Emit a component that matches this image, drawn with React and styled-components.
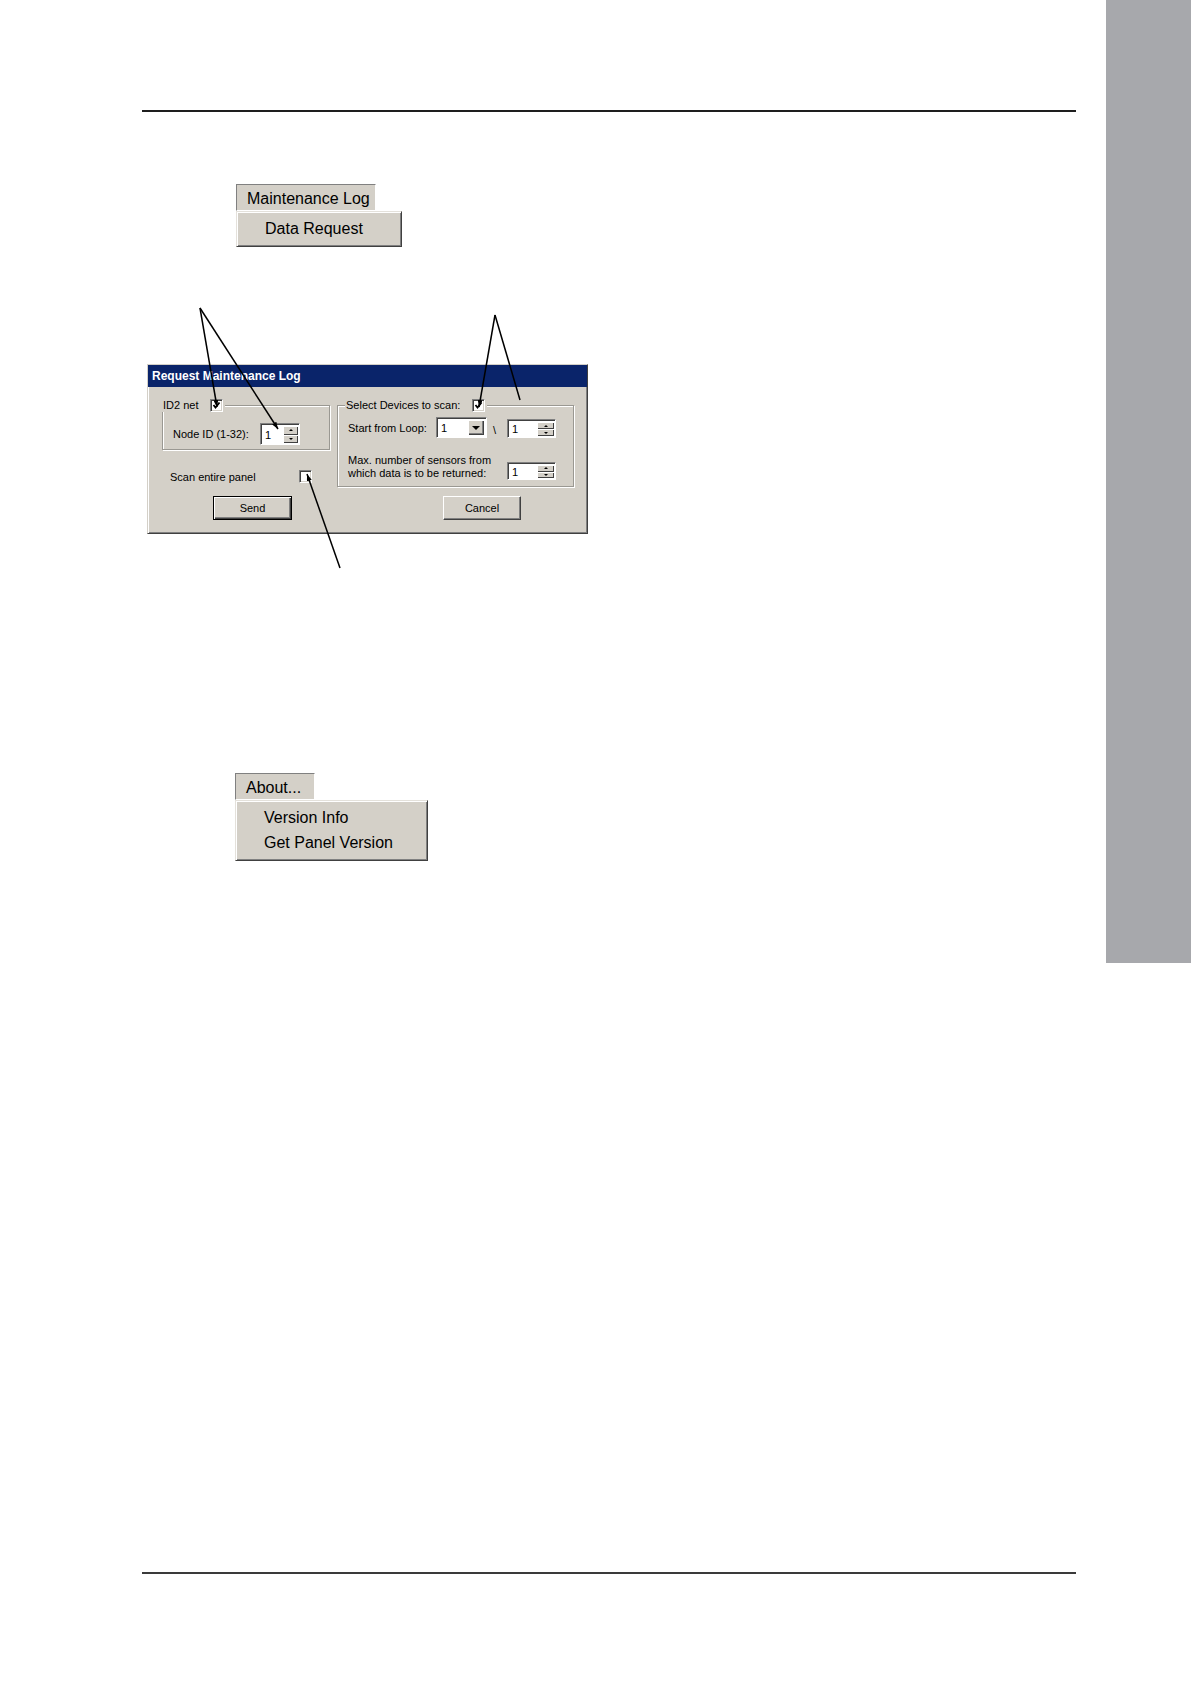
import styled, { createGlobalStyle } from 'styled-components'

const GlobalStyle = createGlobalStyle`
  html, body {
    margin: 0;
    padding: 0;
    background: #fff;
  }
  body {
    font-family: "Liberation Sans", Arial, sans-serif;
    color: #000;
  }
`

const Check = () => (
  <svg width="9" height="9" viewBox="0 0 9 9">
    <polyline points="1.5,4 3.5,6.5 7.5,1.5" fill="none" stroke="#000" strokeWidth="1.8" />
  </svg>
)

const SpinBox = ({ w, h, btn }) => (
  <SpinField $w={w} $h={h}>
    <FieldValue>1</FieldValue>
    <SpinButtons $w={btn}>
      <SpinBtn><Tri $up /></SpinBtn>
      <SpinBtn><Tri /></SpinBtn>
    </SpinButtons>
  </SpinField>
)

const App = () => {
  return (
    <Page>
      <GlobalStyle />
      <Main>
        <Rule $thick={2} $color="#1e1e1e" />

        <Menu $margin="72px 0 0 94px">
          <MenuTitle $w={140}>Maintenance Log</MenuTitle>
          <MenuDrop $w={166}>
            <MenuItem>Data Request</MenuItem>
          </MenuDrop>
        </Menu>

        <Figure>
          <Dialog>
            <TitleBar>Request Maintenance Log</TitleBar>
            <Body>
              <LeftCol>
                <GroupBox $pad="17px 0 4px 10px">
                  <Legend $left={-1}>
                    ID2 net
                    <CheckBox><Check /></CheckBox>
                  </Legend>
                  <NodeRow>
                    <span>Node ID (1-32):</span>
                    <SpinBox w={40} h={22} btn={15} />
                  </NodeRow>
                </GroupBox>
                <ScanRow>
                  <span>Scan entire panel</span>
                  <CheckBox />
                </ScanRow>
                <PushButton $default $w={79} $ml={51} $mt={13}>Send</PushButton>
              </LeftCol>

              <RightCol>
                <GroupBox $pad="11px 0 6px 10px">
                  <Legend $left={7}>
                    Select Devices to scan:
                    <CheckBox><Check /></CheckBox>
                  </Legend>
                  <DeviceGrid>
                    <span>Start from Loop:</span>
                    <Combo>
                      <FieldValue>1</FieldValue>
                      <ComboBtn><DownTri /></ComboBtn>
                    </Combo>
                    <Slash>\</Slash>
                    <SpinBox w={49} h={19} btn={17} />
                    <MaxLabel>
                      Max. number of sensors from
                      <br />
                      which data is to be returned:
                    </MaxLabel>
                    <SpinBox w={49} h={18} btn={17} />
                  </DeviceGrid>
                </GroupBox>
                <PushButton $w={78} $ml={106} $mt={9}>Cancel</PushButton>
              </RightCol>
            </Body>
          </Dialog>

          <Callouts viewBox="0 0 441 270">
            <defs>
              <marker id="head" markerWidth="7" markerHeight="5" refX="7" refY="2.5" orient="auto" markerUnits="userSpaceOnUse">
                <path d="M0,0 L7,2.5 L0,5 z" fill="#000" />
              </marker>
            </defs>
            <line x1="53" y1="8" x2="70" y2="107" markerEnd="url(#head)" />
            <line x1="53" y1="8" x2="131" y2="129" markerEnd="url(#head)" />
            <line x1="348" y1="15" x2="332" y2="107" markerEnd="url(#head)" />
            <line x1="348" y1="15" x2="373" y2="100" />
            <line x1="193" y1="268" x2="160" y2="174" markerEnd="url(#head)" />
          </Callouts>
        </Figure>

        <Menu $margin="203px 0 0 93px">
          <MenuTitle $w={80}>About...</MenuTitle>
          <MenuDrop $w={193}>
            <MenuItem>Version Info</MenuItem>
            <MenuItem>Get Panel Version</MenuItem>
          </MenuDrop>
        </Menu>

        <Rule $thick={2} $color="#3a3a3a" $mt={711} />
      </Main>
      <SideTab />
    </Page>
  )
}

export default App

const Page = styled.div`
  display: flex;
  align-items: flex-start;
  width: 1191px;
  height: 1684px;
  overflow: hidden;
`

const Main = styled.div`
  flex: 1;
  display: flex;
  flex-direction: column;
  align-items: flex-start;
  padding: 110px 30px 0 142px;
`

const Rule = styled.hr`
  align-self: stretch;
  margin: ${p => p.$mt || 0}px 0 0 0;
  border: 0;
  height: ${p => p.$thick}px;
  background: ${p => p.$color};
`

const SideTab = styled.div`
  flex-shrink: 0;
  width: 85px;
  height: 963px;
  background: #a7a8ac;
`

/* menus */

const Menu = styled.div`
  display: flex;
  flex-direction: column;
  align-items: flex-start;
  margin: ${p => p.$margin};
  font-family: "Liberation Sans", Arial, sans-serif;
  font-size: 16px;
`

const MenuTitle = styled.div`
  box-sizing: border-box;
  width: ${p => p.$w}px;
  height: 27px;
  padding: 2px 0 0 10px;
  line-height: 23px;
  background: #d4d0c8;
  border: 1px solid;
  border-color: #808080 #fff #fff #808080;
`

const MenuDrop = styled.div`
  box-sizing: border-box;
  width: ${p => p.$w}px;
  padding: 4px 0 5px 0;
  background: #d4d0c8;
  border: 1px solid;
  border-color: #e4e1db #404040 #404040 #e4e1db;
  box-shadow: inset 1px 1px 0 #fff, inset -1px -1px 0 #808080;
`

const MenuItem = styled.div`
  height: 25px;
  line-height: 25px;
  padding-left: 28px;
`

/* dialog figure */

const Figure = styled.div`
  position: relative;
  box-sizing: border-box;
  width: 441px;
  height: 270px;
  margin: 53px 0 0 5px;
  padding-top: 64px;
`

const Callouts = styled.svg`
  position: absolute;
  left: 0;
  top: 0;
  width: 441px;
  height: 270px;
  overflow: visible;
  pointer-events: none;

  line {
    stroke: #000;
    stroke-width: 1.5;
  }
`

const Dialog = styled.div`
  box-sizing: border-box;
  width: 441px;
  height: 170px;
  background: #d4d0c8;
  border: 1px solid;
  border-color: #d4d0c8 #404040 #404040 #d4d0c8;
  box-shadow: inset 1px 1px 0 #fff, inset -1px -1px 0 #808080;
  font-family: "Liberation Sans", Arial, sans-serif;
  font-size: 11px;
`

const TitleBar = styled.div`
  height: 22px;
  padding-left: 4px;
  line-height: 22px;
  background: #0a246a;
  color: #fff;
  font-size: 12px;
  font-weight: bold;
`

const Body = styled.div`
  display: flex;
  align-items: flex-start;
  gap: 7px;
  padding: 18px 0 0 14px;
`

const LeftCol = styled.div`
  display: flex;
  flex-direction: column;
  align-items: flex-start;
  width: 168px;
`

const RightCol = styled.div`
  display: flex;
  flex-direction: column;
  align-items: flex-start;
  width: 237px;
`

const GroupBox = styled.div`
  position: relative;
  box-sizing: border-box;
  align-self: stretch;
  padding: ${p => p.$pad};
  border: 1px solid #9a9892;
  box-shadow: 1px 1px 0 #fff, inset 1px 1px 0 #fff;
`

const Legend = styled.div`
  position: absolute;
  top: -8px;
  left: ${p => p.$left}px;
  display: flex;
  align-items: center;
  gap: 12px;
  height: 14px;
  padding: 0 2px 0 1px;
  background: #d4d0c8;
`

const CheckBox = styled.span`
  display: inline-flex;
  align-items: center;
  justify-content: center;
  box-sizing: border-box;
  width: 13px;
  height: 13px;
  background: #fff;
  border: 1px solid;
  border-color: #808080 #fff #fff #808080;
  box-shadow: inset 1px 1px 0 #404040, inset -1px -1px 0 #d4d0c8;
`

const NodeRow = styled.div`
  display: grid;
  grid-template-columns: 87px 40px;
  align-items: center;
`

const ScanRow = styled.div`
  display: grid;
  grid-template-columns: 129px 13px;
  align-items: center;
  margin: 20px 0 0 8px;
`

const DeviceGrid = styled.div`
  display: grid;
  grid-template-columns: 88px 51px 20px 49px;
  grid-template-rows: 21px 27px;
  row-gap: 15px;
  align-items: center;
`

const MaxLabel = styled.span`
  grid-column: 1 / 4;
  align-self: end;
  line-height: 13px;
`

const Slash = styled.span`
  padding: 4px 0 0 6px;
`

const SpinField = styled.div`
  box-sizing: border-box;
  display: flex;
  align-self: ${p => (p.$h < 20 ? 'end' : 'center')};
  width: ${p => p.$w}px;
  height: ${p => p.$h}px;
  padding: 2px 1px 1px 2px;
  background: #fff;
  border: 1px solid;
  border-color: #808080 #fff #fff #808080;
  box-shadow: inset 1px 1px 0 #404040;
`

const FieldValue = styled.span`
  flex: 1;
  display: flex;
  align-items: center;
  padding-left: 2px;
`

const SpinButtons = styled.div`
  display: flex;
  flex-direction: column;
  width: ${p => p.$w}px;
`

const SpinBtn = styled.span`
  flex: 1;
  display: flex;
  align-items: center;
  justify-content: center;
  background: #d4d0c8;
  box-shadow: inset 1px 1px 0 #fff, inset -1px -1px 0 #404040;
`

const Tri = styled.span`
  width: 0;
  height: 0;
  border-left: 2px solid transparent;
  border-right: 2px solid transparent;
  ${p => (p.$up ? 'border-bottom: 2px solid #000;' : 'border-top: 2px solid #000;')}
`

const Combo = styled.div`
  box-sizing: border-box;
  display: flex;
  width: 51px;
  height: 21px;
  padding: 2px 2px 2px 2px;
  background: #fff;
  border: 1px solid;
  border-color: #808080 #fff #fff #808080;
  box-shadow: inset 1px 1px 0 #404040;
`

const ComboBtn = styled.span`
  display: flex;
  align-items: center;
  justify-content: center;
  width: 16px;
  background: #d4d0c8;
  box-shadow: inset 1px 1px 0 #fff, inset -1px -1px 0 #404040, inset -2px -2px 0 #808080;
`

const DownTri = styled.span`
  width: 0;
  height: 0;
  border-left: 4px solid transparent;
  border-right: 4px solid transparent;
  border-top: 4px solid #000;
`

const PushButton = styled.button`
  box-sizing: border-box;
  width: ${p => p.$w}px;
  height: 24px;
  margin: ${p => p.$mt}px 0 0 ${p => p.$ml}px;
  padding: 0;
  background: #d4d0c8;
  font: inherit;
  color: #000;
  border: 1px solid;
  border-color: ${p => (p.$default ? '#000' : '#fff #404040 #404040 #fff')};
  box-shadow: ${p =>
    p.$default
      ? 'inset 1px 1px 0 #fff, inset -1px -1px 0 #404040, inset -2px -2px 0 #808080'
      : 'inset -1px -1px 0 #808080'};
`
